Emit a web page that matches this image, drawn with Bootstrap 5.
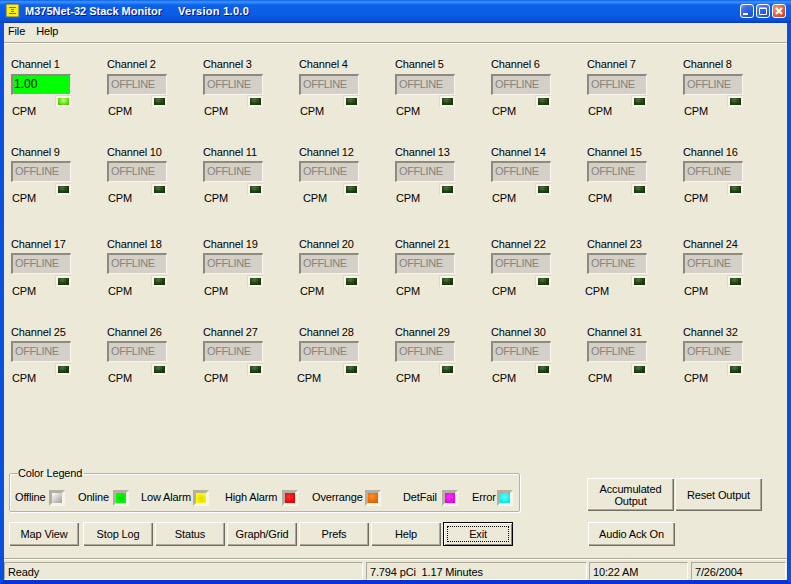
<!doctype html>
<html lang="en"><head><meta charset="utf-8"><title>M375Net-32 Stack Monitor</title>
<link rel="stylesheet" href="https://cdn.jsdelivr.net/npm/bootstrap@5.3.0/dist/css/bootstrap.min.css">
<style>
html,body{margin:0;height:100%;overflow:hidden;background:#0a4fd6}
body{font:11px/14px "Liberation Sans",Arial,sans-serif;color:#000;letter-spacing:-.15px}
.xp-window{width:791px;height:584px;background:#ece9d8;border:solid #0a50e0;border-width:0 4px 4px;border-bottom-color:#0831d9;box-sizing:border-box}
.xp-title{height:23px;margin:0 -4px;padding:0 5px 2px 5px;background:linear-gradient(180deg,#0a5fe8 0,#3d95ff 8%,#0b61e8 22%,#0a5ae6 70%,#0a4fd0 90%,#0838b8 100%);color:#fff;font-weight:700;text-shadow:1px 1px 0 #0f1089;letter-spacing:0}
.xp-name{margin-left:5px}
.xp-ver{margin-left:16px;letter-spacing:.3px}
.xp-ctl{width:14px;height:14px;border:1px solid #fff;border-radius:3px;margin-left:2px;background:radial-gradient(circle at 75% 80%,#1d4fd0,#3f6fe8 65%,#7ea3f5);display:block}
.xp-close{background:radial-gradient(circle at 30% 30%,#f09a7e,#d9502c 70%,#b83010)}
.xp-ctl svg{display:block}
.xp-menu{height:18px;padding:0 4px 2px;gap:11px}
.xp-menu a{color:#000;text-decoration:none}
.xp-sep{height:2px;background:#aca899;border-bottom:1px solid #fff;margin-top:1px;flex:none}
.xp-rows{padding:13px 0 0 7px}
.chan-row{display:grid;grid-template-columns:repeat(8,96px);height:88px}
.chan-row-tall{height:92px}
.chan-label{height:14px}
.chan-box{width:60px;height:21px;margin-top:2px;border:2px solid #8d8a80;border-right:1px solid #f8f6ee;border-bottom:1px solid #f8f6ee;background:#d4d0c8;color:#85837b;padding:0 0 0 2px;line-height:16px;letter-spacing:-.4px}
.chan-on{background:#0f0;color:#000;font-size:12px;letter-spacing:0;padding-left:1px}
.led{display:block;width:16px;height:12px;padding:2px;background:#f7f5ea;border-top:1px solid #dcd9c9;border-left:1px solid #dcd9c9;box-sizing:border-box}
.led i{display:block;height:100%;background:radial-gradient(ellipse at 40% 25%,#4f6f46,#1c400c 55%,#102a02)}
.led-on i{background:radial-gradient(ellipse at 50% 35%,#c4ff80,#60e010 60%,#40b000)}
.chan-led{margin:1px 0 0 44px}
.chan-unit{margin:-4px 0 0 1px;height:14px}
.row-a .chan-box{margin-top:3px}
.row-a .chan-led{margin-top:0}
.row-a .chan-unit,.row-c .chan-unit{margin-top:-3px}
.chan-row .unit-r{margin-left:4px}
.chan-row .unit-l{margin-left:-2px}
.xp-bottom{padding:0 0 0 5px;flex:none}
.xp-left{width:578px}
.xp-legend{width:511px;height:46px;margin:0;border:1px solid #b5b2a4;border-radius:2px;padding:5px 0 0 5px;box-shadow:1px 1px 0 #fff,inset 1px 1px 0 #fff}
.xp-legend legend{float:none;width:auto;font-size:11px;line-height:14px;margin:0 0 0 3px;padding:0 2px 0 0}
.lg-grid{display:grid;grid-template-columns:34px 29px 35px 28px 52px 32px 57px 30px 53px 38px 39px 30px 25px 16px;height:24px;align-items:center}
.lg-led{width:16px;height:16px;margin-top:1px;border:3px solid #f7f5ea;border-top-color:#b3b0a2;border-left-color:#b3b0a2;box-sizing:border-box;display:block}
.lg-led i{display:block;height:100%}
.c-off{background:linear-gradient(135deg,#fff,#a09e96)}
.c-on{background:radial-gradient(circle at 55% 50%,#00d800,#0f0 75%)}
.c-low{background:radial-gradient(circle at 55% 60%,#e0d800,#ff0 80%)}
.c-high{background:radial-gradient(circle at 40% 40%,#ff3030,#e00000 80%)}
.c-over{background:radial-gradient(circle at 40% 35%,#ff9020,#e06000 80%)}
.c-det{background:radial-gradient(circle at 45% 40%,#ff30ff,#e000e0 80%)}
.c-err{background:radial-gradient(circle at 45% 40%,#60ffff,#00e8e8 80%)}
.btn.xp-btn{width:70px;height:24px;padding:0;font-size:11px;line-height:12px;color:#000;background:#ece9d8;border:0;border-radius:0;box-shadow:inset 1px 1px 0 #fff,inset -1px -1px 0 #716f64,inset -2px -2px 0 #aca899;letter-spacing:-.15px}
.xp-actions{gap:2px;margin-top:10px}
.btn.xp-first{margin-right:2px}
.btn.xp-wide{width:87px;height:33px;margin-right:1px}
.btn.xp-audio{height:24px;margin:11px 0 0 1px}
.xp-right{padding-top:12px}
.btn.xp-default{box-shadow:inset 0 0 0 1px #000,inset 2px 2px 0 #fff,inset -2px -2px 0 #8a8778;position:relative}
.xp-default::after{content:"";position:absolute;inset:4px;border:1px dotted #000}
.xp-status{height:22px;margin:12px 0 0;border-top:1px solid #aca899;box-shadow:inset 0 1px 0 #fff;padding-top:3px;flex:none}
.st-cell{height:18px;padding:2px 0 0 3px;border:1px solid #aca899;border-right-color:#fff;border-bottom-color:#fff;box-sizing:border-box}
.st-a{width:359px;margin-right:3px}.st-b{width:221px;margin-right:2px}.st-c{width:99px;margin-right:3px}.st-d{width:95px}
</style></head>
<body>
<div class="xp-window d-flex flex-column">
 <div class="xp-title d-flex align-items-center">
  <svg width="15" height="15" viewBox="0 0 15 15"><rect width="15" height="15" fill="#5a5a70"/><rect x="1.5" y="1.5" width="12" height="12" fill="#f8f010"/><path d="M4 4.5h7M6 6.500h3M6 8.500h3M4 10.500h7" stroke="#77771a" fill="none"/></svg>
  <span class="xp-name">M375Net-32 Stack Monitor</span><span class="xp-ver flex-grow-1">Version 1.0.0</span>
  <span class="xp-ctl"><svg width="12" height="12" viewBox="0 0 12 12"><path d="M2 9h5" stroke="#fff" stroke-width="2"/></svg></span>
  <span class="xp-ctl"><svg width="12" height="12" viewBox="0 0 12 12"><path d="M2.500 3.500h7v6h-7zM2.500 3h7" stroke="#fff" fill="none"/></svg></span>
  <span class="xp-ctl xp-close"><svg width="12" height="12" viewBox="0 0 12 12"><path d="M3 3l6 6M9 3l-6 6" stroke="#fff" stroke-width="2"/></svg></span>
 </div>
 <nav class="xp-menu d-flex align-items-center"><a href="#">File</a><a href="#">Help</a></nav>
 <div class="xp-sep"></div>
 <div class="xp-rows">
  <div class="chan-row row-a">
   <div><div class="chan-label">Channel 1</div><div class="chan-box chan-on">1.00</div><span class="led led-on chan-led"><i></i></span><div class="chan-unit">CPM</div></div>
   <div><div class="chan-label">Channel 2</div><div class="chan-box">OFFLINE</div><span class="led chan-led"><i></i></span><div class="chan-unit">CPM</div></div>
   <div><div class="chan-label">Channel 3</div><div class="chan-box">OFFLINE</div><span class="led chan-led"><i></i></span><div class="chan-unit">CPM</div></div>
   <div><div class="chan-label">Channel 4</div><div class="chan-box">OFFLINE</div><span class="led chan-led"><i></i></span><div class="chan-unit">CPM</div></div>
   <div><div class="chan-label">Channel 5</div><div class="chan-box">OFFLINE</div><span class="led chan-led"><i></i></span><div class="chan-unit">CPM</div></div>
   <div><div class="chan-label">Channel 6</div><div class="chan-box">OFFLINE</div><span class="led chan-led"><i></i></span><div class="chan-unit">CPM</div></div>
   <div><div class="chan-label">Channel 7</div><div class="chan-box">OFFLINE</div><span class="led chan-led"><i></i></span><div class="chan-unit">CPM</div></div>
   <div><div class="chan-label">Channel 8</div><div class="chan-box">OFFLINE</div><span class="led chan-led"><i></i></span><div class="chan-unit">CPM</div></div>
  </div>
  <div class="chan-row chan-row-tall row-b">
   <div><div class="chan-label">Channel 9</div><div class="chan-box">OFFLINE</div><span class="led chan-led"><i></i></span><div class="chan-unit">CPM</div></div>
   <div><div class="chan-label">Channel 10</div><div class="chan-box">OFFLINE</div><span class="led chan-led"><i></i></span><div class="chan-unit">CPM</div></div>
   <div><div class="chan-label">Channel 11</div><div class="chan-box">OFFLINE</div><span class="led chan-led"><i></i></span><div class="chan-unit">CPM</div></div>
   <div><div class="chan-label">Channel 12</div><div class="chan-box">OFFLINE</div><span class="led chan-led"><i></i></span><div class="chan-unit unit-r">CPM</div></div>
   <div><div class="chan-label">Channel 13</div><div class="chan-box">OFFLINE</div><span class="led chan-led"><i></i></span><div class="chan-unit">CPM</div></div>
   <div><div class="chan-label">Channel 14</div><div class="chan-box">OFFLINE</div><span class="led chan-led"><i></i></span><div class="chan-unit">CPM</div></div>
   <div><div class="chan-label">Channel 15</div><div class="chan-box">OFFLINE</div><span class="led chan-led"><i></i></span><div class="chan-unit">CPM</div></div>
   <div><div class="chan-label">Channel 16</div><div class="chan-box">OFFLINE</div><span class="led chan-led"><i></i></span><div class="chan-unit">CPM</div></div>
  </div>
  <div class="chan-row row-c">
   <div><div class="chan-label">Channel 17</div><div class="chan-box">OFFLINE</div><span class="led chan-led"><i></i></span><div class="chan-unit">CPM</div></div>
   <div><div class="chan-label">Channel 18</div><div class="chan-box">OFFLINE</div><span class="led chan-led"><i></i></span><div class="chan-unit">CPM</div></div>
   <div><div class="chan-label">Channel 19</div><div class="chan-box">OFFLINE</div><span class="led chan-led"><i></i></span><div class="chan-unit">CPM</div></div>
   <div><div class="chan-label">Channel 20</div><div class="chan-box">OFFLINE</div><span class="led chan-led"><i></i></span><div class="chan-unit">CPM</div></div>
   <div><div class="chan-label">Channel 21</div><div class="chan-box">OFFLINE</div><span class="led chan-led"><i></i></span><div class="chan-unit">CPM</div></div>
   <div><div class="chan-label">Channel 22</div><div class="chan-box">OFFLINE</div><span class="led chan-led"><i></i></span><div class="chan-unit">CPM</div></div>
   <div><div class="chan-label">Channel 23</div><div class="chan-box">OFFLINE</div><span class="led chan-led"><i></i></span><div class="chan-unit unit-l">CPM</div></div>
   <div><div class="chan-label">Channel 24</div><div class="chan-box">OFFLINE</div><span class="led chan-led"><i></i></span><div class="chan-unit">CPM</div></div>
  </div>
  <div class="chan-row row-d">
   <div><div class="chan-label">Channel 25</div><div class="chan-box">OFFLINE</div><span class="led chan-led"><i></i></span><div class="chan-unit">CPM</div></div>
   <div><div class="chan-label">Channel 26</div><div class="chan-box">OFFLINE</div><span class="led chan-led"><i></i></span><div class="chan-unit">CPM</div></div>
   <div><div class="chan-label">Channel 27</div><div class="chan-box">OFFLINE</div><span class="led chan-led"><i></i></span><div class="chan-unit">CPM</div></div>
   <div><div class="chan-label">Channel 28</div><div class="chan-box">OFFLINE</div><span class="led chan-led"><i></i></span><div class="chan-unit unit-l">CPM</div></div>
   <div><div class="chan-label">Channel 29</div><div class="chan-box">OFFLINE</div><span class="led chan-led"><i></i></span><div class="chan-unit">CPM</div></div>
   <div><div class="chan-label">Channel 30</div><div class="chan-box">OFFLINE</div><span class="led chan-led"><i></i></span><div class="chan-unit">CPM</div></div>
   <div><div class="chan-label">Channel 31</div><div class="chan-box">OFFLINE</div><span class="led chan-led"><i></i></span><div class="chan-unit">CPM</div></div>
   <div><div class="chan-label">Channel 32</div><div class="chan-box">OFFLINE</div><span class="led chan-led"><i></i></span><div class="chan-unit">CPM</div></div>
  </div>
 </div>
 <div class="mt-auto">
  <div class="xp-bottom d-flex">
   <div class="xp-left">
    <fieldset class="xp-legend">
     <legend>Color Legend</legend>
     <div class="lg-grid">
      <span>Offline</span><span class="lg-led"><i class="c-off"></i></span>
      <span>Online</span><span class="lg-led"><i class="c-on"></i></span>
      <span>Low Alarm</span><span class="lg-led"><i class="c-low"></i></span>
      <span>High Alarm</span><span class="lg-led"><i class="c-high"></i></span>
      <span>Overrange</span><span class="lg-led"><i class="c-over"></i></span>
      <span>DetFail</span><span class="lg-led"><i class="c-det"></i></span>
      <span>Error</span><span class="lg-led"><i class="c-err"></i></span>
     </div>
    </fieldset>
    <div class="xp-actions d-flex">
     <button class="btn xp-btn xp-first">Map View</button><button class="btn xp-btn">Stop Log</button><button class="btn xp-btn">Status</button><button class="btn xp-btn">Graph/Grid</button><button class="btn xp-btn">Prefs</button><button class="btn xp-btn">Help</button><button class="btn xp-btn xp-default">Exit</button>
    </div>
   </div>
   <div class="xp-right">
    <div class="d-flex"><button class="btn xp-btn xp-wide">Accumulated<br>Output</button><button class="btn xp-btn xp-wide">Reset Output</button></div>
    <button class="btn xp-btn xp-wide xp-audio d-block">Audio Ack On</button>
   </div>
  </div>
  <div class="xp-status d-flex">
   <div class="st-cell st-a">Ready</div><div class="st-cell st-b">7.794 pCi&nbsp; 1.17 Minutes</div><div class="st-cell st-c">10:22 AM</div><div class="st-cell st-d">7/26/2004</div>
  </div>
 </div>
</div>
</body></html>
